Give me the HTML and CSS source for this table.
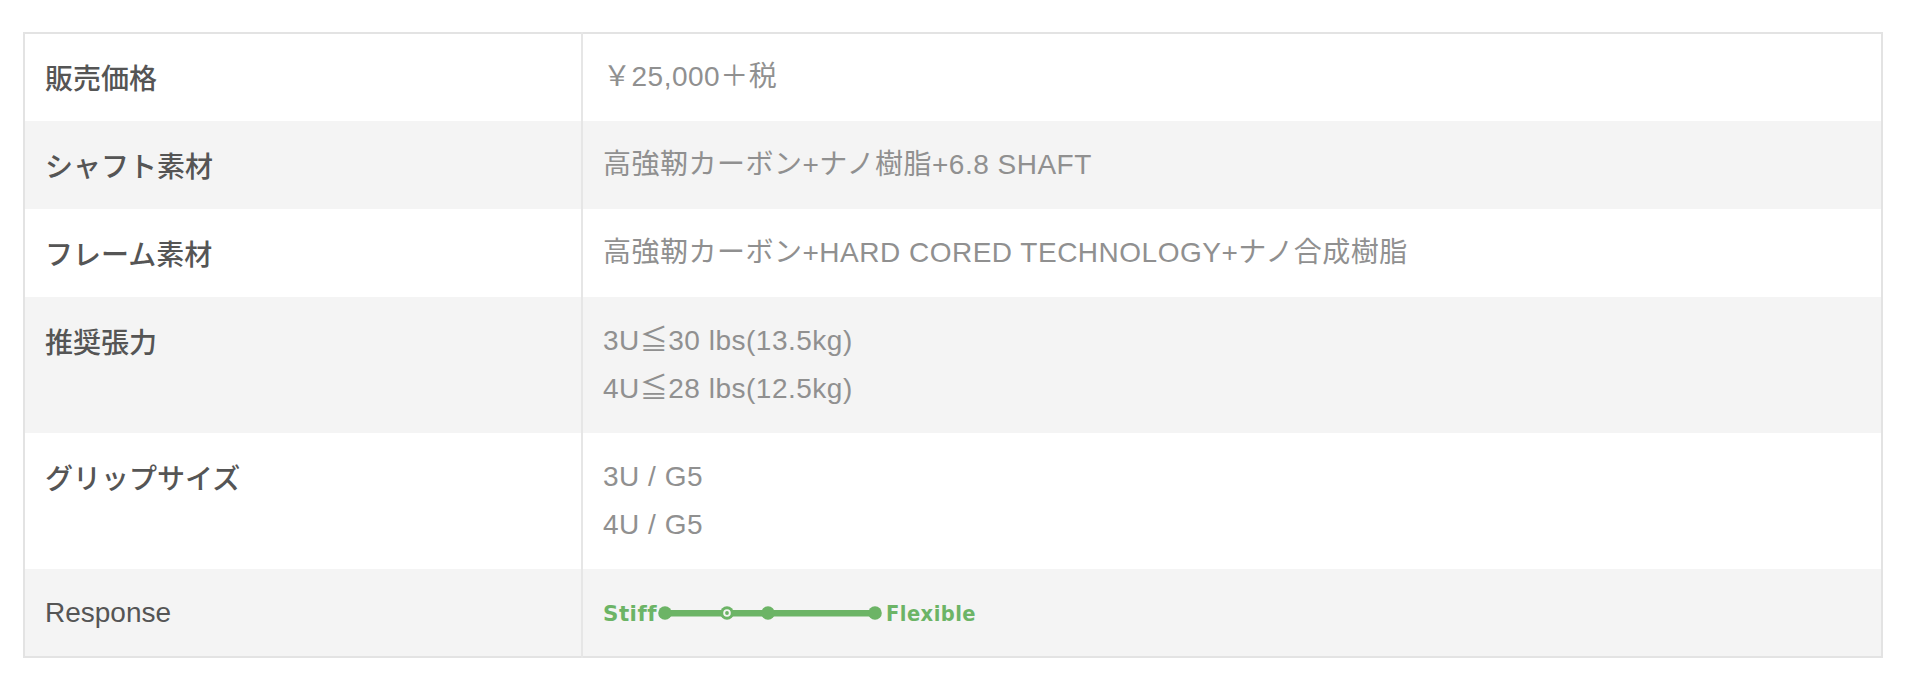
FILE: index.html
```html
<!DOCTYPE html>
<html lang="ja">
<head>
<meta charset="utf-8">
<title>Spec</title>
<link rel="stylesheet" href="styles.css">
</head>
<body>
<table class="spec">
  <tbody>
    <tr>
      <th>販売価格</th>
      <td>￥25,000＋税</td>
    </tr>
    <tr>
      <th>シャフト素材</th>
      <td>高強靭カーボン+ナノ樹脂+6.8 SHAFT</td>
    </tr>
    <tr>
      <th>フレーム素材</th>
      <td>高強靭カーボン+HARD CORED TECHNOLOGY+ナノ合成樹脂</td>
    </tr>
    <tr>
      <th>推奨張力</th>
      <td>3U≦30 lbs(13.5kg)<br>4U≦28 lbs(12.5kg)</td>
    </tr>
    <tr>
      <th>グリップサイズ</th>
      <td>3U / G5<br>4U / G5</td>
    </tr>
    <tr>
      <th class="latin">Response</th>
      <td>
        <svg class="response" width="384" height="24" viewBox="0 0 384 24" aria-label="Stiff – Flexible">
          <g fill="#6cb466">
            <text x="0" y="19.5" font-family="DejaVu Sans" font-weight="bold" font-size="22" textLength="54" lengthAdjust="spacingAndGlyphs">Stiff</text>
            <rect x="62" y="9" width="210" height="6.5"/>
            <circle cx="62" cy="12" r="6.8"/>
            <circle cx="124" cy="12" r="6.8"/>
            <circle cx="124" cy="12" r="3.8" fill="#f4f4f4"/>
            <circle cx="124" cy="12" r="1.9"/>
            <circle cx="165" cy="12" r="6.8"/>
            <circle cx="272" cy="12" r="6.8"/>
            <text x="283" y="19.5" font-family="DejaVu Sans" font-weight="bold" font-size="22" textLength="90" lengthAdjust="spacingAndGlyphs">Flexible</text>
          </g>
        </svg>
      </td>
    </tr>
  </tbody>
</table>
</body>
</html>
```

FILE: styles.css
```css
html, body {
  background: #ffffff;
}

body {
  margin: 32px 34px 0 23px;
  font-family: "Liberation Sans", "Noto Sans CJK JP", sans-serif;
}

.spec {
  width: 100%;
  border-collapse: collapse;
  table-layout: fixed;
  border: 2px solid #e3e3e3;
}

.spec tr:nth-child(even) {
  background: #f4f4f4;
}

.spec th,
.spec td {
  padding: 20px 20px;
  vertical-align: top;
  text-align: left;
  font-size: 28px;
  line-height: 48px;
}

.spec th {
  width: 516px;
  color: #555555;
  font-weight: 500;
  font-family: "Noto Sans CJK JP", "Liberation Sans", sans-serif;
  border-right: 2px solid #e6e6e6;
}

.spec th.latin {
  font-family: "Liberation Sans", sans-serif;
  font-weight: 400;
}

.spec td {
  color: #909090;
  letter-spacing: 0.5px;
}

.spec tr:first-child th,
.spec tr:first-child td {
  padding-top: 19px;
}

.spec tr:last-child th,
.spec tr:last-child td {
  padding-bottom: 19px;
}

.response {
  display: block;
  margin-top: 12px;
  overflow: visible;
}
```
